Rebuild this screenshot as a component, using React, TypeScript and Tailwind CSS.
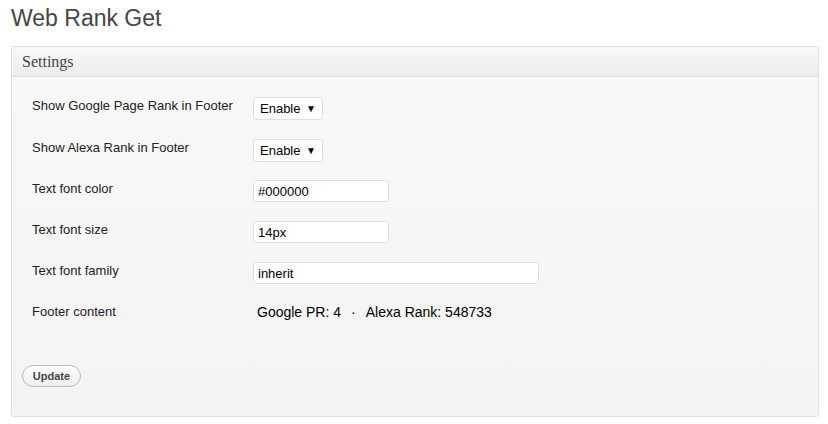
import React from 'react';

const labelCls = 'w-[221px] shrink-0 text-[13px] leading-4 text-[#222] pt-[1px]';
const inputCls =
  'h-[22px] rounded-[3px] border border-[#dfdfdf] bg-white px-[4px] text-[13px] text-black outline-none';

const SelectBox = () => (
  <div className="flex h-[23px] w-[70px] items-center justify-between rounded-[3px] border border-[#dfdfdf] bg-white pl-[6px] pr-[6px] text-[13px] text-black">
    <span>Enable</span>
    <span className="text-[10px] leading-none">▼</span>
  </div>
);

export default function App() {
  return (
    <div
      className="h-[424px] w-[828px] bg-white"
      style={{ fontFamily: '"Liberation Sans", Arial, sans-serif' }}
    >
      <h1 className="px-[11px] pt-[4px] text-[23px] font-normal leading-[28px] text-[#464646]">Web Rank Get</h1>

      {/* Settings panel */}
      <div className="mx-[11px] mt-[14px] w-[808px] overflow-hidden rounded-[3px] border border-[#dfdfdf]">
        <div className="flex h-[30px] items-center border-b border-[#dfdfdf] bg-gradient-to-b from-[#f9f9f9] to-[#ececec] px-[10px]">
          <span
            className="text-[16px] leading-none text-[#464646]"
            style={{ fontFamily: '"Liberation Serif", Georgia, serif' }}
          >
            Settings
          </span>
        </div>

        <div className="h-[339px] bg-gradient-to-b from-[#f8f8f8] to-[#f4f4f4] px-[10px] pt-[20px]">
          <div className="flex flex-col pl-[10px]">
            <div className="flex h-[42px] items-start">
              <div className={labelCls}>Show Google Page Rank in Footer</div>
              <SelectBox />
            </div>
            <div className="flex h-[41px] items-start">
              <div className={labelCls}>Show Alexa Rank in Footer</div>
              <SelectBox />
            </div>
            <div className="flex h-[41px] items-start">
              <div className={labelCls}>Text font color</div>
              <input className={`${inputCls} w-[136px]`} defaultValue="#000000" />
            </div>
            <div className="flex h-[41px] items-start">
              <div className={labelCls}>Text font size</div>
              <input className={`${inputCls} w-[136px]`} defaultValue="14px" />
            </div>
            <div className="flex h-[41px] items-start">
              <div className={labelCls}>Text font family</div>
              <input className={`${inputCls} w-[286px]`} defaultValue="inherit" />
            </div>
            <div className="flex h-[41px] items-start">
              <div className={labelCls}>Footer content</div>
              <div className="pl-[4px] text-[14px] leading-[18px] text-black">
                Google PR: 4<span className="mx-[10px]">·</span>Alexa Rank: 548733
              </div>
            </div>
          </div>

          <button className="mt-[21px] h-[22px] w-[59px] rounded-full border border-[#bbb] bg-gradient-to-b from-white to-[#eeeeee] text-[11px] font-bold text-[#464646]">
            Update
          </button>
        </div>
      </div>
    </div>
  );
}
